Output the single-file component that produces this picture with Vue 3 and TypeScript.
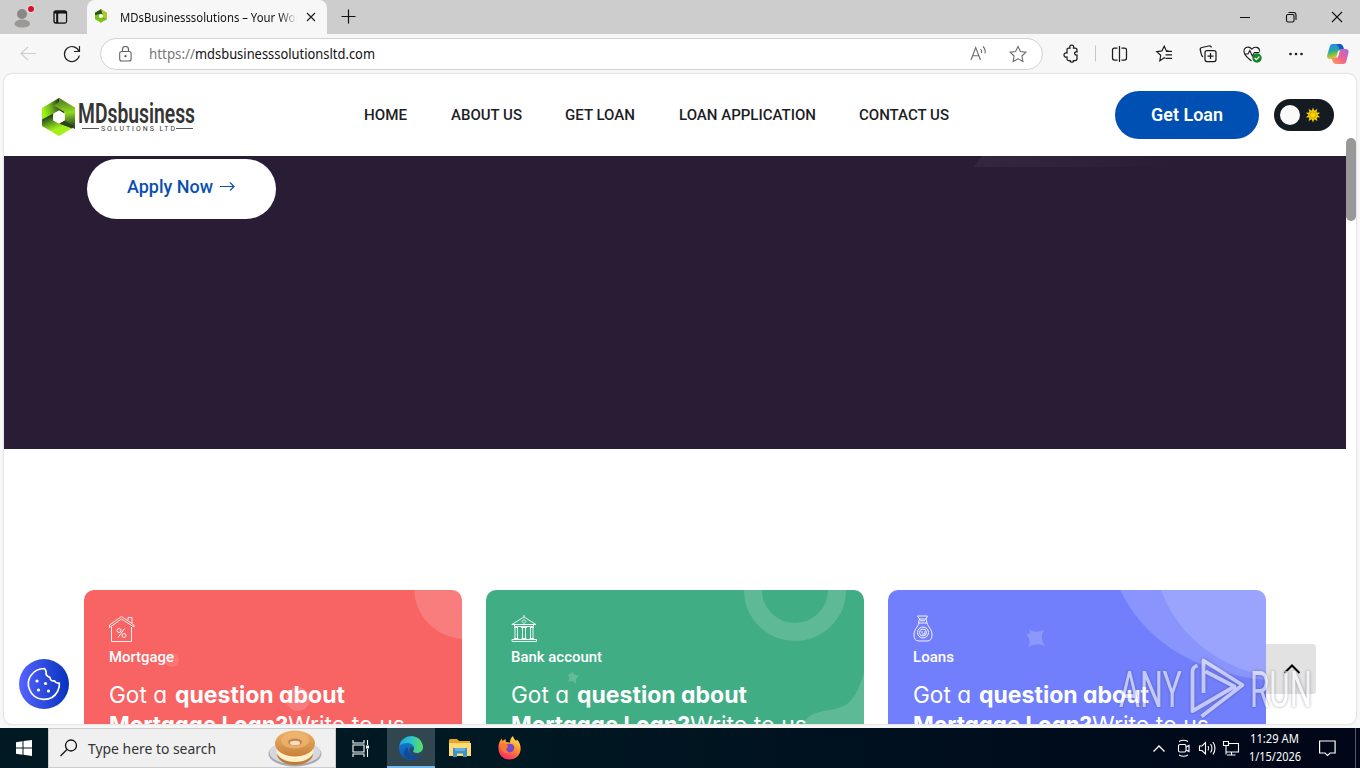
<script setup lang="ts">
import { h, type FunctionalComponent } from 'vue'

interface FitProps { t: string; w: number; s: number; b?: number; wt?: number; adj?: string }

// Single line of text set to an exact width.
const Fit: FunctionalComponent<FitProps> = (p) =>
  h('svg', { width: p.w, height: Math.ceil(p.s * 1.3), style: { overflow: 'visible', display: 'block', flex: 'none' } }, [
    h('text', {
      x: 0, y: p.b ?? p.s, textLength: p.w, lengthAdjust: p.adj ?? 'spacingAndGlyphs', fill: 'currentColor',
      'font-size': p.s, 'font-weight': p.wt ?? 400,
    }, p.t),
  ])
Fit.props = ['t', 'w', 's', 'b', 'wt', 'adj']

const nav = [
  { t: 'HOME', w: 43 },
  { t: 'ABOUT US', w: 71 },
  { t: 'GET LOAN', w: 70 },
  { t: 'LOAN APPLICATION', w: 137 },
  { t: 'CONTACT US', w: 90 },
]
const cards = [
  { kind: 'red', label: 'Mortgage', w: 65 },
  { kind: 'green', label: 'Bank account', w: 91 },
  { kind: 'blue', label: 'Loans', w: 41 },
]
const rays = Array.from({ length: 10 }, (_, i) => i * 36)
</script>

<template>
  <div class="desktop">
    <div class="tabstrip">
      <svg class="strip-icons" width="87" height="34" viewBox="0 0 87 34">
        <circle cx="22" cy="14" r="5" fill="#8a8784" />
        <path d="M14.500 24c0-6 15.500-6 15.500 0 0 4.600-15.500 4.600-15.500 0z" fill="#9a9794" />
        <circle cx="31" cy="9" r="4" fill="#ddd" />
        <circle cx="31" cy="9" r="3" fill="#d70f28" />
        <rect x="54" y="11" width="12.500" height="12" rx="2" fill="none" stroke="#111" stroke-width="1.300" />
        <path d="M54 12.300h12.500M57.300 12v11" stroke="#111" stroke-width="2.200" />
        <path d="M58.500 14h7.300v8.300h-7.300z" fill="#cdcdcd" />
      </svg>
      <div class="tab">
        <svg class="favicon" width="12" height="14" viewBox="0 0 34 38">
          <path d="M17 0 34 10v18L17 38 0 28V10z" fill="#78c51c" />
          <path d="M17 0 34 10v18L22 24V13z" fill="#b4c62a" />
          <path d="M17 0 0 10v7l13-4 9 4zM34 28l-12-4-9 1-13 3 17-4z" fill="#295516" />
          <circle cx="17" cy="19" r="6" fill="#fff" />
        </svg>
        <div class="tab-title"><Fit t="MDsBusinesssolutions – Your Wor" :w="180" :s="12.5" /></div>
        <svg width="10" height="10" viewBox="0 0 10 10"><path d="m1 1 8 8M9 1 1 9" stroke="#222" stroke-width="1.200" /></svg>
      </div>
      <svg class="plus" width="15" height="15" viewBox="0 0 15 15"><path d="M7.500.5v14M.5 7.500h14" stroke="#111" stroke-width="1.200" /></svg>
      <svg class="win" width="120" height="34" viewBox="0 0 120 34" fill="none" stroke="#111" stroke-width="1.100">
        <path d="M0 17.500h10M92 12l10 10m0-10-10 10" />
        <rect x="46.500" y="14.500" width="7.500" height="7.500" rx="1.500" />
        <path d="M48.500 12.500h5q2.500 0 2.500 2.500v5" />
      </svg>
    </div>

    <div class="toolbar">
      <svg class="nav-icons" width="100" height="40" viewBox="0 0 100 40" fill="none">
        <path d="M36 19.500H21m7-6.500-7 6.500 7 6.500" stroke="#cfcfcf" stroke-width="1.200" />
        <path d="M79 17.500a7.500 7.500 0 1 0 .3 4M79.500 12v5.500H74" stroke="#222" stroke-width="1.200" />
      </svg>
      <div class="address">
        <svg class="lock" width="13" height="16" viewBox="0 0 13 16" fill="none" stroke="#606060" stroke-width="1.100">
          <rect x=".7" y="5.500" width="11.400" height="9.500" rx="2" /><path d="M3.500 5.500V3.500a3 3 0 0 1 6 0v2" /><circle cx="6.500" cy="10.200" r=".6" fill="#606060" />
        </svg>
        <Fit class="scheme" t="https://" :w="46" :s="14.5" :b="14" />
        <Fit class="host" t="mdsbusinesssolutionsltd.com" :w="180" :s="14.5" :b="14" />
        <svg class="addr-icons" width="62" height="40" viewBox="0 0 62 40" fill="none" stroke="#6b6b6b" stroke-width="1.100">
          <path d="m3 26 4.700-12.500L12.500 26M4.500 21.700h6.500M12.500 15q1.500 1.700 1 4M15 12.500q3 3 2 7" />
          <path d="m50 12.500 2.400 5 5.500.7-4 3.800 1 5.500-4.900-2.700-4.900 2.700 1-5.500-4-3.800 5.500-.7z" />
        </svg>
      </div>
      <svg class="tools" width="317" height="40" viewBox="1043 34 317 40" fill="none" stroke="#1b1b1b" stroke-width="1.250">
        <path d="M1067 49.500q0-1.500 1.500-1.500h1.500q-.8-3 1.700-3t1.800 3h1.500q2 0 2 2v2c-3-1-3.500 3.500 0 3v3.500q0 2-2 2h-1.500c.8 2.300-4 2.300-3.300 0h-1.700q-1.500 0-1.500-1.500v-2c-4 1-4-5 0-4z" />
        <path d="M1095.500 45.500v16" stroke="#c6c6c6" stroke-width="1" />
        <path d="M1117.500 48h-3q-2 0-2 2v8q0 2 2 2h3m4-12h3q2 0 2 2v8q0 2-2 2h-3M1119.500 46v16" />
        <path d="m1165.500 58.500-1.200-.8-4.500 3 .9-5.400-4-3.600 5.200-.8 2.300-4.700 2.200 4.700h2M1166 51.300h6m-6.500 3.500h6.500m-6 3.500h6" stroke-width="1.150" />
        <rect x="1205" y="50.500" width="11" height="11" rx="2" /><path d="M1210.500 53v6m-3-3h6M1203 57q-1.500-1-2-4l-.7-3q-.5-2 1.500-2.500l7-1.500q2-.4 2.700 1.500" />
        <path d="M1251.500 61c-3-2.500-7.500-5.500-7.500-9.500 0-5 5.500-5.500 7.800-2.300 2.500-3.200 8-2.500 7.800 2.300M1244 54h4l1.800-3.500 2.600 5.500 2-3.500h5" stroke-width="1.100" />
        <circle cx="1257" cy="58" r="4.700" fill="#16842c" stroke="none" /><path d="m1254.700 58 1.700 1.700 3-3.200" stroke="#fff" />
        <g fill="#1b1b1b" stroke="none"><circle cx="1290.500" cy="54" r="1.300" /><circle cx="1296" cy="54" r="1.300" /><circle cx="1301.500" cy="54" r="1.300" /></g>
        <defs>
          <linearGradient id="cpa" x1="0" y1="0" x2=".3" y2="1"><stop offset="0" stop-color="#2b86ee" /><stop offset=".5" stop-color="#23a8a8" /><stop offset=".75" stop-color="#8cc23c" /><stop offset="1" stop-color="#f4c430" /></linearGradient>
          <linearGradient id="cpb" x1="1" y1="0" x2="0" y2="1"><stop offset="0" stop-color="#a56be8" /><stop offset=".5" stop-color="#ee6295" /><stop offset="1" stop-color="#ffa34b" /></linearGradient>
        </defs>
        <g stroke="none">
          <path d="M1332 44h8q2.500 0 3.500 3l1 3h-4q-2 0-2.700 2.200l-2 6.800h-5.500q-4 0-3-4l2.300-8q.7-3 2.400-3z" fill="url(#cpa)" />
          <path d="M1339 44q3 0 4 3l1 3-4 1q-1-5-4-7z" fill="#1b55c5" />
          <path d="M1344 64h-8q-2.500 0-3.500-3l-.8-3h4q2 0 2.700-2.200l2-6.800h5q4 0 3 4l-2 8q-.7 3-2.400 3z" fill="url(#cpb)" />
        </g>
      </svg>
    </div>

    <div class="frame">
      <main class="page">
        <header class="site-header">
          <div class="logo">
            <svg width="34" height="38" viewBox="0 0 34 38">
              <defs>
                <linearGradient id="ga" gradientUnits="userSpaceOnUse" x1="2" y1="14" x2="20" y2="8"><stop offset="0" stop-color="#9af413" /><stop offset=".4" stop-color="#6fb41c" /><stop offset="1" stop-color="#1e2d1a" /></linearGradient>
                <linearGradient id="gb" gradientUnits="userSpaceOnUse" x1="24" y1="4" x2="28" y2="31"><stop offset="0" stop-color="#5f8f22" /><stop offset=".4" stop-color="#93dc1f" /><stop offset=".65" stop-color="#5c8f22" /><stop offset="1" stop-color="#20301a" /></linearGradient>
                <linearGradient id="gc" gradientUnits="userSpaceOnUse" x1="6" y1="17" x2="12" y2="32"><stop offset="0" stop-color="#1c2a19" /><stop offset=".5" stop-color="#5b9a1d" /><stop offset="1" stop-color="#a4f01a" /></linearGradient>
              </defs>
              <path d="M0 10 17 0l5.500 3.500V15.500L17 12.500 11.300 16 0 22z" fill="url(#ga)" />
              <path d="M17 0 33 9.500V31L22.500 25V14L12 7.500 17 4z" fill="url(#gb)" />
              <path d="m0 21.500 11.300-6v7l5.700 3 16 3-16 9.500L0 28z" fill="url(#gc)" />
              <path d="m17 25.500 5.500-3L33 28.500l-3 2z" fill="#2c441b" />
              <path d="m17 12.500 5.700 3.300v6.500L17 25.500l-5.700-3.200v-6.500z" fill="#fff" />
            </svg>
            <div class="logo-text">
              <Fit t="MDsbusiness" :w="117" :s="27" :b="24" :wt="600" />
              <div class="logo-sub"><i /><Fit t="SOLUTIONS LTD" :w="74" :s="7" :b="6.5" adj="spacing" /><i /></div>
            </div>
          </div>
          <nav><Fit v-for="n in nav" :key="n.t" :t="n.t" :w="n.w" :s="15" :b="15" :wt="500" /></nav>
          <div class="get-loan"><Fit t="Get Loan" :w="72" :s="18" :b="18" :wt="600" /></div>
          <div class="toggle">
            <i />
            <svg width="16" height="16" viewBox="-8 -8 16 16" fill="#ffd500">
              <path v-for="r in rays" :key="r" d="M-1.300-4 0-7.600 1.300-4z" :transform="`rotate(${r})`" />
              <circle r="4.600" /><circle r="3.200" fill="none" stroke="#a97d00" stroke-width=".6" />
            </svg>
          </div>
        </header>

        <div class="content">
          <section class="hero">
            <svg class="hero-shape" width="210" height="11" viewBox="0 0 210 11">
              <defs><linearGradient id="hs"><stop stop-color="#fff" stop-opacity=".05" /><stop offset="1" stop-color="#fff" stop-opacity="0" /></linearGradient></defs>
              <path d="M8 0h202v11H0z" fill="url(#hs)" />
            </svg>
            <div class="apply">
              <Fit t="Apply Now" :w="86" :s="18" :b="18" :wt="500" />
              <svg width="15" height="10" viewBox="0 0 15 10" fill="none" stroke="#0a50b0" stroke-width="1.200"><path d="M0 4.500h14M10 .5l4 4-4 4" /></svg>
            </div>
          </section>

          <section class="cards">
            <article v-for="c in cards" :key="c.kind" :class="['card', c.kind]">
              <svg class="card-bg" width="378" height="134" viewBox="0 0 378 134" fill="#fff">
                <g v-if="c.kind === 'red'">
                  <circle cx="381" cy="-2" r="51" opacity=".17" /><circle cx="88" cy="70" r="7" opacity=".12" /><circle cx="214" cy="109" r="12" opacity=".15" />
                </g>
                <g v-else-if="c.kind === 'green'">
                  <circle cx="309" cy="0" r="42" fill="none" stroke="#fff" stroke-width="18" opacity=".15" />
                  <path d="M378 83c-9 30-18 34-34 37-16 2-23 6-27 14h61z" opacity=".15" />
                  <path d="M86 81q1.500 5 8 4.500-6 2-3.500 9-3-5.500-9-2.500 4-4-.5-8 5 1 5-3z" opacity=".18" />
                </g>
                <g v-else>
                  <path d="M232 0c22 45 67 82 146 90V0z" opacity=".17" /><path d="M273 0c14 40 51 75 105 86V0z" opacity=".15" />
                  <path d="M141 39q5 5 15 1-5 8 1 16-8-4-17 1 4-7-2-13 6 1 3-5z" opacity=".2" />
                </g>
              </svg>
              <svg class="card-icon" width="27" height="28" viewBox="0 0 27 28" fill="none" stroke="#fff" stroke-width=".9">
                <g v-if="c.kind === 'red'">
                  <path d="M2.500 12v14.500h20V12M.5 10 12.500 1.500 25 10v2L12.500 4 .5 12.500zM19 5V2.500h4V8" />
                  <circle cx="10" cy="15.500" r="2" /><circle cx="15" cy="20.500" r="2" /><path d="m15.500 13.500-6.500 9" />
                </g>
                <g v-else-if="c.kind === 'green'">
                  <path d="M.8 9.500 13 2l12 7.500zM3.500 9.500h19v2h-19zM1 24.500h24.500v2H1zM13 2V0M13 4.500l2 2-2 2-2-2z" />
                  <path d="M3 12.500h4m3 0h6m3 0h4M4 12.500v11m2.500-11v11m5-11v11m3-11v11m5-11v11m2.500-11v11M3 23.500h4.500m3 0h5m3 0h4.500" />
                </g>
                <g v-else>
                  <path d="M4.500 1h10l-1.500 3 1 4H5.500l1-4zM6 4h7M6 8c-1 4-5 6-5 12q0 6 5 6h8q5 0 5-6c0-6-4-8-5-12M7 5.700h5" />
                  <circle cx="10" cy="17.500" r="5.500" /><circle cx="10" cy="17.500" r="3.500" /><path d="M8 17h2m-1 2h3V16" />
                </g>
              </svg>
              <Fit class="card-label" :t="c.label" :w="c.w" :s="15" :b="15" :wt="500" />
              <h2><Fit t="Got a" :w="58" :s="23" :b="23" /><Fit class="bold" t="question about" :w="170" :s="23" :b="23" :wt="700" /></h2>
              <h2><Fit t="Mortgage Loan?" :w="179" :s="23" :b="23" :wt="700" /><Fit t="Write to us" :w="117" :s="23" :b="23" /></h2>
            </article>
          </section>
        </div>

        <div class="scrollbar" />
        <svg class="cookie" width="50" height="50" viewBox="0 0 50 50">
          <defs><linearGradient id="ck"><stop stop-color="#5664ff" /><stop offset="1" stop-color="#0632bd" /></linearGradient></defs>
          <circle cx="25" cy="25" r="25" fill="url(#ck)" />
          <path d="M25.500 9.500C13 10 6.500 21 10.500 30.500c5 12.500 22 13 28 2 1.700-3 2.200-6 1.800-8.500q-3.300.6-4.800-2.200-4 .8-4.500-3.300-5-2-3.800-5.500-.4-2-1.700-3.500z" fill="none" stroke="#fff" stroke-width="1.700" stroke-linejoin="round" />
          <g fill="#fff"><circle cx="18" cy="22" r="1.600" /><circle cx="26.500" cy="24.500" r="1.600" /><circle cx="19.500" cy="31" r="1.600" /><circle cx="29.500" cy="32" r="1.600" /></g>
        </svg>
        <div class="to-top"><svg width="18" height="10" viewBox="0 0 18 10"><path d="m1.500 9 7.500-7.500L16.500 9" fill="none" stroke="#000" stroke-width="2" /></svg></div>
        <svg class="watermark" width="200" height="66" viewBox="1116 656 200 66">
          <g fill="#fff" font-size="50" font-weight="400">
            <text x="1119" y="707" textLength="63" lengthAdjust="spacingAndGlyphs">ANY</text>
            <text x="1250" y="707" textLength="62" lengthAdjust="spacingAndGlyphs">RUN</text>
            <path d="M1203.500 693V660.500l39 24.500-41 31.500M1197.500 665.500q-5 1.500-5 6V711l42-24.500-29-15" fill="none" stroke="#fff" stroke-width="3.800" stroke-linejoin="round" />
          </g>
        </svg>
      </main>
    </div>

    <footer class="taskbar">
      <div class="start"><svg width="16" height="16" viewBox="0 0 16 16" fill="#fff"><path d="M0 2.200 6.500 1.300v6.200H0zM7.500 1.100 16 0v7.500H7.500zM0 8.500h6.500v6.200L0 13.800zM7.500 8.500H16V16l-8.500-1.200z" /></svg></div>
      <div class="search">
        <svg width="18" height="18" viewBox="0 0 18 18" fill="none" stroke="#111" stroke-width="1.300"><circle cx="11" cy="6.500" r="5.500" /><path d="m7 10.500-6.500 6.500" /></svg>
        <Fit t="Type here to search" :w="128" :s="15" :b="16" />
        <svg class="bagel" width="56" height="38" viewBox="0 0 56 38">
          <defs><linearGradient id="bg" x2="0" y2="1"><stop stop-color="#efb36a" /><stop offset="1" stop-color="#c8803a" /></linearGradient></defs>
          <ellipse cx="27" cy="25" rx="26.500" ry="12.500" fill="#a6abb2" /><ellipse cx="27" cy="23.500" rx="25.500" ry="11.500" fill="#d5d8dc" />
          <ellipse cx="27" cy="25" rx="18" ry="11" fill="#c07a35" /><ellipse cx="27" cy="22" rx="18.500" ry="11" fill="#fff0c9" />
          <ellipse cx="27" cy="14.500" rx="20" ry="13" fill="url(#bg)" /><ellipse cx="27" cy="11.500" rx="14" ry="8" fill="#f1b872" opacity=".7" />
          <ellipse cx="27" cy="13" rx="7" ry="3.500" fill="#c58346" /><ellipse cx="27" cy="14" rx="5" ry="2.200" fill="#eee0c9" />
        </svg>
      </div>
      <div class="task"><svg width="18" height="17" viewBox="0 0 18 17" fill="none" stroke="#fff" stroke-width="1.100"><path d="M1 0v3h11V0M1 17v-3h11v3M1 5h11v7H1zM15.500 0v5m0 4v8" /><path d="M14 5.500h3v3h-3z" fill="#fff" stroke="none" /></svg></div>
      <div class="task active">
        <svg width="24" height="24" viewBox="0 0 24 24">
          <defs><linearGradient id="ea" x1="0" x2="1"><stop stop-color="#22a5dc" /><stop offset=".55" stop-color="#32c9bd" /><stop offset="1" stop-color="#62e052" /></linearGradient><linearGradient id="eb" x2="0" y2="1"><stop stop-color="#1583d5" /><stop offset="1" stop-color="#0b57ad" /></linearGradient></defs>
          <circle cx="12" cy="12" r="12" fill="url(#eb)" />
          <path d="M.5 9.500C3-2 22-4 24 11c0 5-5 7-8.500 5.500-1.500-.5-1.800-1.500-.7-2.700C17 8 8 4 .5 9.500z" fill="url(#ea)" />
          <path d="M9 11c-1 6 4 11 12.500 8.500C18 24 13 24.500 9 23 3 20 4 13 9 11z" fill="#104b9b" />
          <path d="M14.500 14c-1.500 2-.5 3 2 3.500 3 .5 5.500-1 7-3 .3 2-1 4.500-2.500 5.500-8 1.500-12-4-10-8 1-2 4-1 3.500 2z" fill="#35474f" />
        </svg>
      </div>
      <div class="task"><svg width="22" height="19" viewBox="0 0 22 19"><path d="M1 0h7l2 2h11v15H0V1z" fill="#e9a624" /><path d="M0 4h22v13H0z" fill="#ffdc73" /><path d="M4 9h14v9h-4v-3.500H8V18H4z" fill="#3d92cd" /><path d="M6 9h10v3H6z" fill="#61b1df" /></svg></div>
      <div class="task">
        <svg width="23" height="24" viewBox="0 0 23 24">
          <defs><linearGradient id="ff" x1=".8" y1="0" x2=".3" y2="1"><stop stop-color="#fff14e" /><stop offset=".45" stop-color="#ff9130" /><stop offset="1" stop-color="#f52765" /></linearGradient></defs>
          <path d="M1.500 6 3.500 2.500 4.500 5 7.500 3l.5 3 4 .5c0-3 1-5 3-6.500.5 2.500 2 3.500 3 5l1-1.500c3 3 4 7 3.500 11-1 6-6 9-11 9-7 0-11-5-11-11 0-3 0-4 1-6.500z" fill="url(#ff)" />
          <path d="M7.500 9.500c2-2.500 7-2.500 8.500.5 1 3-1 6.500-4.500 6.500-3 0-4.500-2-4-4.500l3 .5z" fill="#7745d0" /><path d="M3 9q5-2 7.500 1l-2.500 2q0 4 4 4-5 2.500-7.500-1z" fill="#ff792d" />
        </svg>
      </div>
      <svg class="tray" width="90" height="40" viewBox="1151 728 90 40" fill="none" stroke="#fff" stroke-width="1.100">
        <path d="m1153.500 751.500 5.500-5.500 5.500 5.500" stroke-width="1.400" />
        <rect x="1178.500" y="744.500" width="7.500" height="7.500" rx="1.500" /><path d="m1186 747 3-1.500v6l-3-1.500M1179 741.500q4.500-2.500 9 0M1179 755q4.500 2.500 9 0" />
        <path d="M1199.500 746v4.500h2.500l3.500 3.500v-11.500l-3.500 3.500zM1208 746q1.500 2.200 0 4.500M1210.500 744q3 4.200 0 8.500M1213 742q4 6.200 0 12.500" />
        <path d="M1229 743.500h9.500v8.500H1226v-6M1231.500 752v3m-4.500 0h8.500M1223.500 741.500h5v4h-5zM1226 745.500v9" />
      </svg>
      <div class="clock"><Fit t="11:29 AM" :w="49" :s="12" :b="12" /><Fit t="1/15/2026" :w="52" :s="12" :b="12" /></div>
      <svg class="note" width="17" height="17" viewBox="0 0 17 17"><path d="M.6 1h15.500v12h-5L8.500 15.500 6 13H.6z" fill="none" stroke="#fff" stroke-width="1.200" /></svg>
      <i class="peek" />
    </footer>
  </div>
</template>

<style>
body { margin: 0; overflow: hidden; }
</style>

<style scoped>
.desktop { width: 1360px; height: 768px; display: flex; flex-direction: column; overflow: hidden; background: #f7f7f7; font-family: "Noto Sans", "Open Sans", sans-serif; color: #111; }
.desktop * { box-sizing: border-box; }
.tabstrip { height: 34px; flex: none; background: #cdcdcd; display: flex; align-items: center; }
.strip-icons { background: #cdcdcd; }
.tab { width: 240px; height: 34px; background: #f7f7f7; border-radius: 8px 8px 0 0; display: flex; align-items: center; padding: 0 11px 0 8px; }
.favicon { margin-top: -3px; }
.tab-title { width: 178px; margin: 1px 9px 0 13px; overflow: hidden; -webkit-mask-image: linear-gradient(90deg, #000 90%, transparent); mask-image: linear-gradient(90deg, #000 90%, transparent); }
.plus { margin: -1px 0 0 14px; }
.win { margin-left: auto; }
.toolbar { height: 40px; flex: none; display: flex; align-items: center; }
.nav-icons { flex: none; }
.address { width: 943px; height: 32px; border: 1px solid #d2d2d2; border-radius: 16px; background: #fff; display: flex; align-items: center; }
.lock { margin: -1px 17px 0 18px; flex: none; }
.scheme { color: #777; }
.host { color: #111; }
.addr-icons { margin: 0 12px 0 auto; flex: none; }
.tools { flex: none; }
.frame { height: 654px; flex: none; padding: 0 4px 4px; }
.page { position: relative; height: 650px; border-radius: 8px; background: #fff; box-shadow: 0 0 2px #bbb; overflow: hidden; font-family: Roboto, sans-serif; }
.site-header { height: 82px; display: flex; align-items: center; padding: 0 22px 0 38px; }
.logo { display: flex; width: 154px; height: 38px; margin-top: 4px; gap: 2px; }
.logo-text { width: 118px; color: #353535; padding-top: 1px; }
.logo-text > svg { height: 26px; }
.logo-sub { display: flex; align-items: center; justify-content: space-between; padding: 0 3px 0 4px; height: 7px; }
.logo-sub i { width: 17px; height: 1px; background: #555; }
nav { display: flex; gap: 43.5px; margin-left: 168px; color: #1d1d25; }
.get-loan { width: 144px; height: 48px; border-radius: 24px; background: #004fb3; color: #fff; display: flex; align-items: center; justify-content: center; margin-left: auto; }
.toggle { width: 60px; height: 32px; border-radius: 16px; background: #141c21; margin-left: 15px; display: flex; align-items: center; padding-left: 6px; gap: 5px; }
.toggle i { width: 20px; height: 20px; border-radius: 50%; background: #fafafa; }
.content { width: 1342px; }
.hero { position: relative; height: 293px; background: #291c35; padding: 3px 83px; }
.hero-shape { position: absolute; left: 970px; top: 0; }
.apply { width: 189px; height: 60px; border-radius: 30px; background: #fff; color: #0a50b0; display: flex; align-items: center; padding: 0 0 4px 40px; gap: 7px; }
.apply svg { flex: none; }
.cards { display: grid; grid-template-columns: repeat(3, 378px); gap: 24px; padding: 141px 0 0 80px; }
.card { position: relative; height: 180px; border-radius: 10px; overflow: hidden; color: #fff; padding: 25px 25px; }
.card > * { position: relative; }
.red { background: #f86363; }
.green { background: #41ad84; }
.blue { background: #717ffc; }
.card .card-bg { position: absolute; left: 0; top: 0; }
.card-icon { display: block; }
.card-label { margin-top: 4px; }
h2 { display: flex; margin: 0; height: 30px; font-family: Inter, sans-serif; font-feature-settings: "cv11"; }
.card-label + h2 { margin-top: 13px; }
.bold { margin-left: 8px; }
.scrollbar { position: absolute; right: 0; top: 64px; width: 10px; height: 83px; border-radius: 5px; background: #989898; }
.cookie { position: absolute; left: 15px; top: 585px; }
.to-top { position: absolute; left: 1262px; top: 570px; width: 50px; height: 50px; border-radius: 0 3px 3px 0; background: #e2e2e2; display: flex; align-items: center; justify-content: center; padding-left: 2px; }
.watermark { position: absolute; left: 1112px; top: 582px; filter: drop-shadow(0 0 1.5px rgba(60, 60, 80, .8)); opacity: .58; font-family: Roboto, sans-serif; }
.taskbar { height: 40px; flex: none; display: flex; align-items: center; background: linear-gradient(90deg, #001923 35%, #00101e 65%, #000617); color: #fff; }
.start { width: 48px; height: 40px; display: flex; align-items: center; justify-content: center; }
.search { width: 288px; height: 40px; background: #f0f0f0; border: 1px solid #ccc; display: flex; align-items: center; padding-left: 11px; gap: 10px; color: #333; }
.bagel { margin-left: 42px; }
.task { width: 48px; height: 40px; margin-left: 1px; display: flex; align-items: center; justify-content: center; }
.task.active { background: #32464f; border-bottom: 2px solid #76b9ed; margin-left: 2px; padding-top: 1px; }
.tray { margin-left: auto; flex: none; }
.clock { width: 64px; height: 40px; display: flex; flex-direction: column; align-items: center; gap: 2px; padding: 3px 0 0 3px; }
.note { margin: 0 19px 0 14px; flex: none; }
.peek { width: 5px; height: 40px; border-left: 1px solid #555b68; }
</style>
